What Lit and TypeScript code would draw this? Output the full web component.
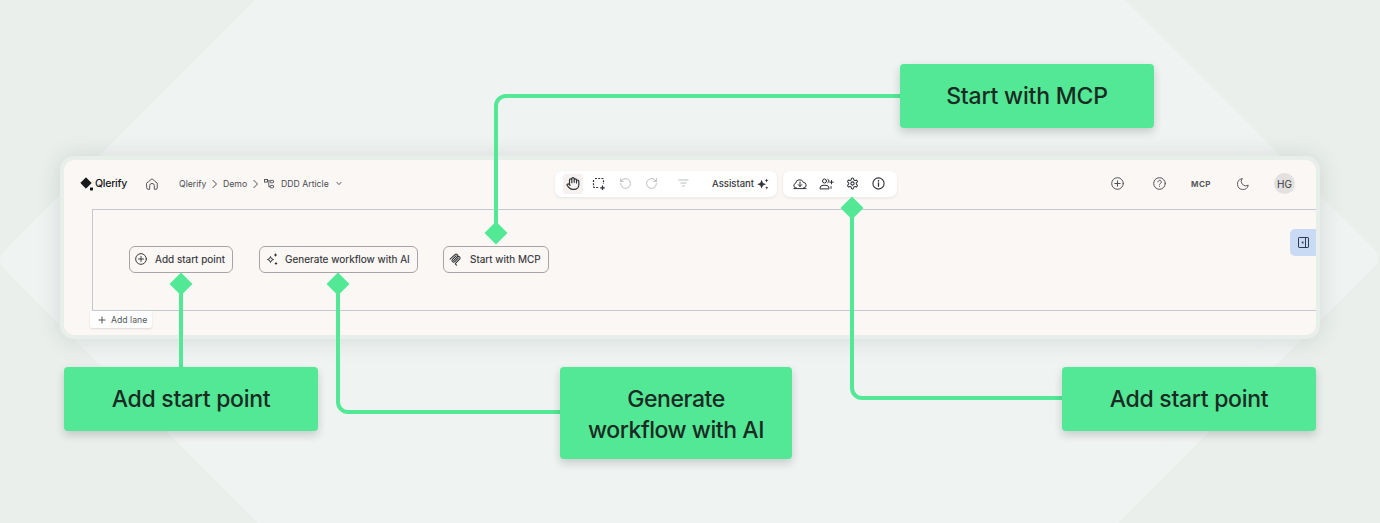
import { LitElement, html, css } from "lit";
import { customElement } from "lit/decorators.js";

const home = html`<svg width="14" height="14" viewBox="0 0 24 24" fill="none" stroke="currentColor" stroke-width="1.7" stroke-linejoin="round" stroke-linecap="round"><path d="M3 10.5 12 3l9 7.5V19a2 2 0 0 1-2 2h-3v-6a4 4 0 0 0-8 0v6H5a2 2 0 0 1-2-2z"/></svg>`;
const chevR = html`<svg width="5" height="10" viewBox="0 0 5 10" fill="none" stroke="currentColor" stroke-width="1"><path d="M.5 1 4.5 5 .5 9"/></svg>`;
const flow = html`<svg width="10" height="10" viewBox="0 0 10 10" fill="none" stroke="currentColor" stroke-width=".9"><rect x=".5" y=".5" width="3" height="2.6"/><rect x="6.2" y="1.4" width="3.3" height="2.4" rx=".6"/><rect x="6.2" y="6.4" width="3.3" height="2.4" rx=".6"/><path d="M3.5 1.8h2.7M4.8 2.5v5.2h1.4"/></svg>`;
const chevD = html`<svg width="6" height="5" viewBox="0 0 6 5" fill="none" stroke="currentColor" stroke-width=".9"><path d="M.6 1 3 3.6 5.4 1"/></svg>`;
const hand = html`<svg width="14" height="15" viewBox="0 0 24 24" fill="none" stroke="currentColor" stroke-width="2" stroke-linecap="round" stroke-linejoin="round"><path d="M18 11V6a2 2 0 0 0-4 0M14 10V4a2 2 0 0 0-4 0v2M10 10.5V6a2 2 0 0 0-4 0v8"/><path d="M18 8a2 2 0 1 1 4 0v6a8 8 0 0 1-8 8h-2c-2.8 0-4.5-.86-6-2.34l-3.6-3.6a2 2 0 0 1 2.83-2.82L7 15" /></svg>`;
const select = html`<svg width="14" height="14" viewBox="0 0 14 14" fill="none" stroke="currentColor" stroke-width="1.2"><path d="M3 1.5h7.5a1 1 0 0 1 1 1V7M1.5 3v6.5a1 1 0 0 0 1 1H7" stroke-dasharray="2 1.2"/><path d="M10.5 8.5v4.5M8.2 10.8h4.6" stroke-width="1.3"/></svg>`;
const undo = html`<svg width="13" height="13" viewBox="0 0 24 24" fill="none" stroke="currentColor" stroke-width="1.7" stroke-linecap="round" stroke-linejoin="round"><path d="M3 12a9 9 0 1 0 9-9 9.75 9.75 0 0 0-6.74 2.74L3 8"/><path d="M3 3v5h5"/></svg>`;
const redo = html`<svg width="13" height="13" viewBox="0 0 24 24" fill="none" stroke="currentColor" stroke-width="1.7" stroke-linecap="round" stroke-linejoin="round"><path d="M21 12a9 9 0 1 1-9-9c2.52 0 4.93 1 6.74 2.74L21 8"/><path d="M21 3v5h-5"/></svg>`;
const filter = html`<svg width="11" height="9" viewBox="0 0 11 9" fill="none" stroke="currentColor" stroke-width="1"><path d="M.5 1h10M2.5 4h6M4.2 7h2.6"/></svg>`;
const sparkFill = html`<svg width="12" height="12" viewBox="0 0 12 12" fill="currentColor"><path d="M4.6 1.8 6 5 9 6.2 6 7.4 4.6 10.6 3.2 7.4.2 6.2 3.2 5z"/><path d="M9.6.4 10.2 1.9 11.7 2.5 10.2 3.1 9.6 4.6 9 3.1 7.5 2.5 9 1.9zM9.8 8.2 10.3 9.3 11.4 9.8 10.3 10.3 9.8 11.4 9.3 10.3 8.2 9.8 9.3 9.3z"/></svg>`;
const sparkLine = html`<svg width="14" height="14" viewBox="0 0 14 14" fill="none" stroke="currentColor" stroke-width="1"><path d="M5.5 4.5 6.4 6.6 8.5 7.5 6.4 8.4 5.5 10.5 4.6 8.4 2.5 7.5 4.6 6.6z"/><path d="M10.5 1.6v2.8M9.1 3h2.8M11 10.3v2.4M9.8 11.5h2.4" stroke-width="1"/></svg>`;
const cloud = html`<svg width="14" height="14" viewBox="0 0 14 14" fill="none" stroke="currentColor" stroke-width="1" stroke-linejoin="round" stroke-linecap="round"><path d="M3.6 11H3a2.4 2.4 0 0 1-.4-4.7 4 4 0 0 1 7.7-1A2.9 2.9 0 0 1 11 11h-.6M1 11.6h12"/><path d="M7 5v4.4M5.2 7.6 7 9.4l1.8-1.8"/></svg>`;
const users = html`<svg width="15" height="14" viewBox="0 0 15 14" fill="none" stroke="currentColor" stroke-width="1" stroke-linecap="round"><circle cx="5.5" cy="4" r="2"/><path d="M1 11.5V11a3 3 0 0 1 3-2.7h3A3 3 0 0 1 10 11v.5z"/><path d="M8.8 2.2a2 2 0 0 1 0 3.6M12.5 3.5v3.4M10.8 5.2h3.4M12 9.5v1.8"/></svg>`;
const gear = html`<svg width="13" height="13" viewBox="0 0 24 24" fill="none" stroke="currentColor" stroke-width="1.9" stroke-linecap="round" stroke-linejoin="round"><path d="M12.22 2h-.44a2 2 0 0 0-2 2v.18a2 2 0 0 1-1 1.73l-.43.25a2 2 0 0 1-2 0l-.15-.08a2 2 0 0 0-2.73.73l-.22.38a2 2 0 0 0 .73 2.73l.15.1a2 2 0 0 1 1 1.72v.51a2 2 0 0 1-1 1.74l-.15.09a2 2 0 0 0-.73 2.73l.22.38a2 2 0 0 0 2.73.73l.15-.08a2 2 0 0 1 2 0l.43.25a2 2 0 0 1 1 1.73V20a2 2 0 0 0 2 2h.44a2 2 0 0 0 2-2v-.18a2 2 0 0 1 1-1.73l.43-.25a2 2 0 0 1 2 0l.15.08a2 2 0 0 0 2.73-.73l.22-.39a2 2 0 0 0-.73-2.73l-.15-.08a2 2 0 0 1-1-1.74v-.5a2 2 0 0 1 1-1.74l.15-.09a2 2 0 0 0 .73-2.73l-.22-.38a2 2 0 0 0-2.73-.73l-.15.08a2 2 0 0 1-2 0l-.43-.25a2 2 0 0 1-1-1.73V4a2 2 0 0 0-2-2z"/><circle cx="12" cy="12" r="3"/></svg>`;
const info = html`<svg width="13" height="13" viewBox="0 0 13 13" fill="none" stroke="currentColor" stroke-width="1.1" stroke-linecap="round"><circle cx="6.5" cy="6.5" r="5.6"/><path d="M6.5 6v3.2" stroke-width="1.3"/><circle cx="6.5" cy="3.9" r=".8" fill="currentColor" stroke="none"/></svg>`;
const plusC = (s: number) => html`<svg width=${s} height=${s} viewBox="0 0 13 13" fill="none" stroke="currentColor" stroke-width="1" stroke-linecap="round"><circle cx="6.5" cy="6.5" r="5.8"/><path d="M6.5 3.8v5.4M3.8 6.5h5.4"/></svg>`;
const help = html`<svg width="13" height="13" viewBox="0 0 13 13" fill="none" stroke="currentColor" stroke-width="1" stroke-linecap="round"><circle cx="6.5" cy="6.5" r="5.8"/><path d="M4.9 4.9a1.7 1.7 0 1 1 2.6 1.5c-.6.4-1 .7-1 1.5"/><circle cx="6.5" cy="9.5" r=".5" fill="currentColor" stroke="none"/></svg>`;
const moon = html`<svg width="14" height="14" viewBox="0 0 24 24" fill="none" stroke="currentColor" stroke-width="1.6" stroke-linecap="round" stroke-linejoin="round"><path d="M10 3a8 8 0 0 0 11 11 9.3 9.3 0 1 1-11-11Z"/></svg>`;
const panel = html`<svg width="11" height="11" viewBox="0 0 11 11" fill="none" stroke="currentColor" stroke-width="1"><rect x=".5" y=".5" width="10" height="10" rx=".6"/><path d="M7.5.5v10"/><path d="M5.4 3.9v3.2L3.4 5.5z" fill="currentColor" stroke="none"/></svg>`;
const mcpIcon = html`<svg width="13" height="13" viewBox="0 0 24 24" fill="none" stroke="currentColor" stroke-width="1.9" stroke-linecap="round" stroke-linejoin="round"><path d="M2 11.5 11 3a3 3 0 0 1 4.3 4.2"/><path d="M8.5 14 15.3 7.2A3 3 0 0 1 19.6 11.4L12 19a1.2 1.2 0 0 0 0 1.7L14 22.5"/><path d="M13.3 5 6.4 11.8A3 3 0 0 0 10.7 16L17.5 9.2"/></svg>`;

@customElement("app-root")
export class AppRoot extends LitElement {
  static styles = css`
    :host { display: block; position: relative; width: 1380px; height: 523px; overflow: hidden; background: #eaefeb; font-family: Inter, "Liberation Sans", sans-serif; color: #2f3136; }
    .bg { position: absolute; inset: 0; }
    .stage { position: relative; padding: 156px 60px 0; }
    .window { width: 1252px; height: 175px; border: 4px solid #e8eeea; border-radius: 14px; background: #fbf7f5; box-shadow: 0 1px 24px rgba(40,50,45,.13); display: flex; flex-direction: column; overflow: hidden; }
    .header { flex: 0 0 49px; height: 49px; display: flex; align-items: center; padding: 0 21px 2px 16px; box-sizing: border-box; }
    .left { flex: 0 0 475px; display: flex; align-items: center; font-size: 8.7px; color: #4b4d52; white-space: nowrap; }
    .logo { display: flex; align-items: center; gap: 1px; color: #17181a; font-weight: 500; font-size: 10.6px; letter-spacing: -.3px; width: 65px; }
    .home { display: flex; width: 34px; color: #55575c; }
    .left svg { flex: none; }
    .w27 { width: 27px; margin-right: 6px; }
    .w24 { width: 24px; margin: 0 6px; }
    .gapr6 { display: flex; margin-right: 6px; }
    .w46 { width: 46px; margin: 0 9px 0 7px; }
    .tools { display: flex; align-items: center; height: 26px; background: #fff; border-radius: 7px; box-shadow: 0 1px 3px rgba(0,0,0,.08); box-sizing: border-box; }
    .t1 { width: 222px; margin-right: 6px; padding-left: 8px; }
    .t2 { width: 114px; padding-left: 4px; }
    .tb { display: flex; align-items: center; justify-content: center; width: 26px; height: 20px; flex: none; }
    .tb.act { width: 20px; background: #f6f1ee; border-radius: 3px; margin-right: 3px; }
    .tb.dim { color: #b5b7b9; }
    .tb.filt { margin-left: 6px; margin-right: 16px; color: #b9bbbd; }
    .assist { display: flex; align-items: center; gap: 3px; font-size: 9.5px; font-weight: 500; white-space: nowrap; color: #34363b; }
    .right { margin-left: auto; display: flex; align-items: center; color: #4f5156; }
    .r { display: flex; align-items: center; justify-content: center; }
    .r1 { width: 13px; margin-right: 29px; } .r2 { width: 13px; margin-right: 25px; }
    .mcp { font-size: 8px; font-weight: 700; letter-spacing: .5px; margin-right: 25px; color: #55575b; }
    .r3 { width: 14px; margin-right: 24px; }
    .avatar { width: 21px; height: 21px; border-radius: 50%; background: #e3e1df; display: flex; align-items: center; justify-content: center; font-size: 10px; font-weight: 400; color: #3a3a3c; }
    .lane { position: relative; box-sizing: border-box; height: 102px; margin-left: 28px; border: 1px solid #c5c8d3; border-right: 0; padding: 36px 0 0 36px; display: flex; align-items: flex-start; }
    .btn { display: flex; align-items: center; box-sizing: border-box; height: 27px; border: 1px solid #a5a5a7; border-radius: 6px; font-size: 10px; font-weight: 400; color: #2e3034; padding: 0 0 1px 5px; white-space: nowrap; -webkit-text-stroke: .1px #2e3034; }
    .btn svg { flex: none; }
    .b1 { width: 104px; margin-right: 26px; gap: 8px; }
    .b2 { width: 159px; margin-right: 25px; gap: 6px; }
    .b3 { width: 106px; gap: 8px; }
    .tab { position: absolute; right: 0; top: 19px; width: 26px; height: 27px; background: #c9daf5; border-radius: 5px 0 0 5px; display: flex; align-items: center; justify-content: center; color: #2f3c50; }
    .addlane { display: flex; align-items: center; gap: 5px; box-sizing: border-box; width: 62px; height: 17px; margin-left: 26px; padding-left: 8px; background: #fff; border-radius: 2px; box-shadow: 0 1px 2px rgba(0,0,0,.12); font-size: 8.7px; color: #55575c; }
    .lines { position: absolute; inset: 0; pointer-events: none; }
    .note { position: absolute; box-sizing: border-box; background: #52e896; border-radius: 4px; box-shadow: 0 4px 9px rgba(30,50,40,.2); display: flex; align-items: center; justify-content: center; text-align: center; color: #1b2a22; font-size: 23px; line-height: 31px; letter-spacing: -.3px; font-weight: 500; width: 254px; height: 64px; }
    .n1 { left: 900px; top: 64px; letter-spacing: -.2px; }
    .n2 { left: 64px; top: 367px; }
    .n3 { left: 560px; top: 367px; width: 232px; height: 92px; padding-top: 3px; letter-spacing: -.45px; }
    .n4 { left: 1062px; top: 367px; }
  `;

  render() {
    return html`
      <svg class="bg" width="1380" height="523" viewBox="0 0 1380 523"><path d="M312 -40 12 260 322 570 1054 570 1366 258 1068 -40Z" fill="#eff3f2" stroke="#eff3f2" stroke-width="24" stroke-linejoin="round"/></svg>
      <div class="stage">
        <div class="window">
          <div class="header">
            <div class="left">
              <div class="logo"><svg width="14" height="14" viewBox="0 0 14 14" fill="currentColor"><path d="M6 .8 11.2 6 6 11.2.8 6z" stroke="currentColor" stroke-linejoin="round"/><rect x="10" y="10.4" width="3" height="3" rx=".4"/></svg>Qlerify</div>
              <span class="home">${home}</span>
              <span class="w27">Qlerify</span>${chevR}
              <span class="w24">Demo</span><span class="gapr6">${chevR}</span>
              ${flow}<span class="w46">DDD Article</span>${chevD}
            </div>
            <div class="tools t1">
              <span class="tb act">${hand}</span>
              <span class="tb">${select}</span>
              <span class="tb dim">${undo}</span>
              <span class="tb dim">${redo}</span>
              <span class="tb filt">${filter}</span>
              <span class="assist">Assistant ${sparkFill}</span>
            </div>
            <div class="tools t2">
              <span class="tb">${cloud}</span>
              <span class="tb">${users}</span>
              <span class="tb">${gear}</span>
              <span class="tb">${info}</span>
            </div>
            <div class="right">
              <span class="r r1">${plusC(13)}</span>
              <span class="r r2">${help}</span>
              <span class="mcp">MCP</span>
              <span class="r r3">${moon}</span>
              <span class="avatar">HG</span>
            </div>
          </div>
          <div class="lane">
            <div class="btn b1">${plusC(12)}Add start point</div>
            <div class="btn b2">${sparkLine}Generate workflow with AI</div>
            <div class="btn b3">${mcpIcon}Start with MCP</div>
            <div class="tab">${panel}</div>
          </div>
          <div class="addlane"><svg width="8" height="8" viewBox="0 0 8 8" stroke="currentColor" stroke-width="1"><path d="M4 .5v7M.5 4h7"/></svg>Add lane</div>
        </div>
      </div>
      <svg class="lines" width="1380" height="523" viewBox="0 0 1380 523" fill="none" stroke="#52e896" stroke-width="4">
        <path d="M181 284V368"/>
        <path d="M338 284V402a10 10 0 0 0 10 10H562"/>
        <path d="M496 233V106a10 10 0 0 1 10-10H902"/>
        <path d="M852 208V388a10 10 0 0 0 10 10H1064"/>
        <g fill="#52e896" stroke="none">
          <path d="M181 272.5 192.5 284 181 295.5 169.5 284z"/>
          <path d="M338 272.5 349.5 284 338 295.5 326.5 284z"/>
          <path d="M496 221.5 507.5 233 496 244.5 484.5 233z"/>
          <path d="M852 196.5 863.5 208 852 219.5 840.5 208z"/>
        </g>
      </svg>
      <div class="note n1">Start with MCP</div>
      <div class="note n2">Add start point</div>
      <div class="note n3">Generate<br />workflow with AI</div>
      <div class="note n4">Add start point</div>
    `;
  }
}
